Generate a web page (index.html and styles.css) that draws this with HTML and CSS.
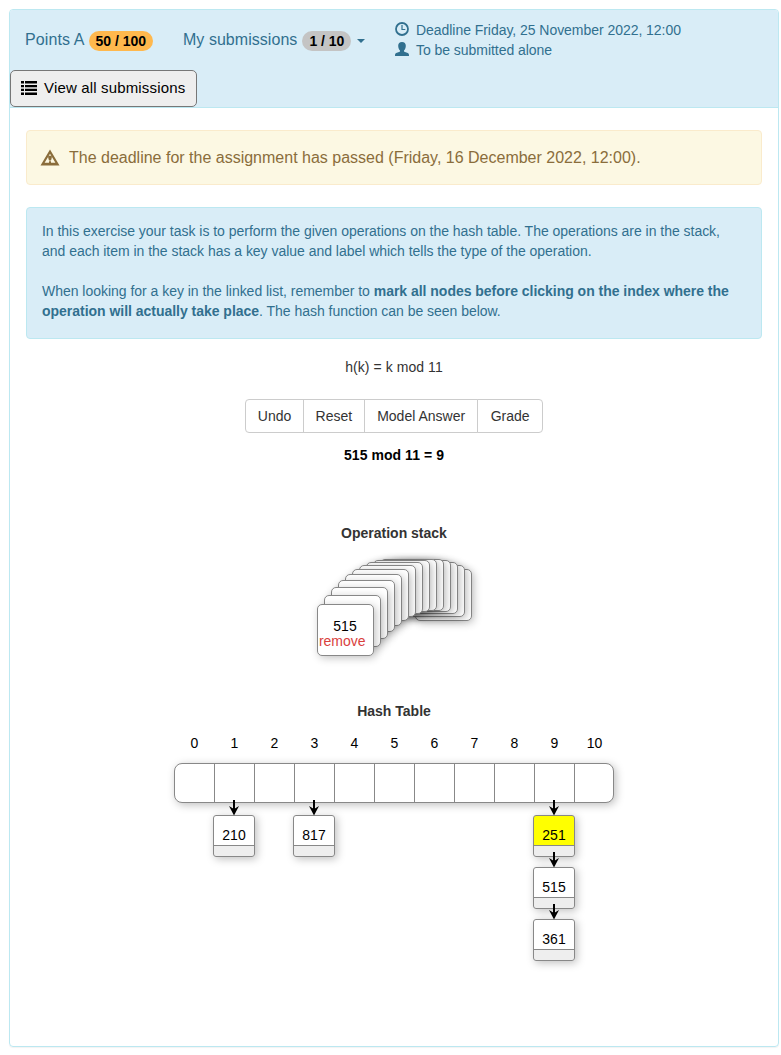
FILE: index.html
```html
<!DOCTYPE html>
<html lang="en">
<head>
<meta charset="utf-8">
<title>Hash table exercise</title>
<link rel="stylesheet" href="styles.css">
</head>
<body>
<main class="panel">
  <header class="panel-head">
    <div class="info-row">
      <div class="points">Points A<span class="badge badge-warning">50 / 100</span></div>
      <div class="submissions">My submissions<span class="badge">1 / 10</span><i class="caret"></i></div>
      <div class="details">
        <div class="detail"><svg class="icon" width="14" height="14" viewBox="0 0 14 14"><circle cx="7" cy="7" r="6" fill="none" stroke="currentColor" stroke-width="1.8"/><path d="M7 3v4.500h3.300" fill="none" stroke="currentColor" stroke-width="1.200"/></svg>Deadline Friday, 25 November 2022, 12:00</div>
        <div class="detail"><svg class="icon" width="14" height="14" viewBox="0 0 14 14"><path d="M7 0C4.500 0 3.200 1.400 3.200 3.700c0 2 .700 3.800 1.800 4.800v1C4.200 10.300 1 10.700.3 11.700 0 12.200 0 13 0 14h14c0-1 0-1.800-.3-2.300-.7-1-3.900-1.400-4.700-2.200v-1c1.100-1 1.800-2.800 1.800-4.800C10.800 1.400 9.500 0 7 0z" fill="currentColor"/></svg>To be submitted alone</div>
      </div>
    </div>
    <button class="view-all"><svg width="16" height="14" viewBox="0 0 16 14"><path d="M0 0h3v2.500H0zM4 0h12v2.500H4zM0 4h3v2.300H0zM4 4h12v2.300H4zM0 7.800h3v2.300H0zM4 7.800h12v2.300H4zM0 11.600h3V14H0zM4 11.600h12V14H4z"/></svg>View all submissions</button>
  </header>
  <div class="panel-body">
    <div class="alert alert-warning"><svg width="20" height="17" viewBox="0 0 20 17"><path fill-rule="evenodd" d="M10 .5L19.500 16.500H.5zM10 4.700L4.600 13.800h10.800z" fill="currentColor"/><path d="M8.200 6.800h3.600v2L11 11.500H9L8.200 8.800zM9 12.200h2V14H9z" fill="currentColor"/></svg>The deadline for the assignment has passed (Friday, 16 December 2022, 12:00).</div>
    <div class="alert alert-info">
      <p>In this exercise your task is to perform the given operations on the hash table. The operations are in the stack, and each item in the stack has a key value and label which tells the type of the operation.</p>
      <p>When looking for a key in the linked list, remember to <b>mark all nodes before clicking on the index where the operation will actually take place</b>. The hash function can be seen below.</p>
    </div>
    <p class="formula">h(k) = k mod 11</p>
    <div class="buttons"><button>Undo</button><button>Reset</button><button>Model Answer</button><button>Grade</button></div>
    <p class="result">515 mod 11 = 9</p>
    <h2 class="stack-title">Operation stack</h2>
    <div class="stack">
      <div class="card" style="left:98px;top:10px"></div>
      <div class="card" style="left:91px;top:6px"></div>
      <div class="card" style="left:84px;top:3px"></div>
      <div class="card" style="left:77px;top:1px"></div>
      <div class="card" style="left:70px;top:0px"></div>
      <div class="card" style="left:63px;top:0px"></div>
      <div class="card" style="left:56px;top:1px"></div>
      <div class="card" style="left:49px;top:3px"></div>
      <div class="card" style="left:42px;top:6px"></div>
      <div class="card" style="left:35px;top:10px"></div>
      <div class="card" style="left:28px;top:15px"></div>
      <div class="card" style="left:21px;top:21px"></div>
      <div class="card" style="left:14px;top:28px"></div>
      <div class="card" style="left:7px;top:36px"></div>
      <div class="card" style="left:0px;top:45px"><span class="key">515</span><span class="op">remove</span></div>
    </div>
    <h2 class="table-title">Hash Table</h2>
    <div class="indexes"><span>0</span><span>1</span><span>2</span><span>3</span><span>4</span><span>5</span><span>6</span><span>7</span><span>8</span><span>9</span><span>10</span></div>
    <div class="hash">
      <div class="cells"><i></i><i></i><i></i><i></i><i></i><i></i><i></i><i></i><i></i><i></i><i></i></div>
      <div class="node" style="left:39px;top:52px">210</div>
      <div class="node" style="left:119px;top:52px">817</div>
      <div class="node marked" style="left:359px;top:52px">251</div>
      <div class="node" style="left:359px;top:104px">515</div>
      <div class="node" style="left:359px;top:156px">361</div>
      <svg class="arrows" width="440" height="200" viewBox="0 0 440 200">
        <defs><g id="arrow"><path d="M0 0v11" stroke="#000" stroke-width="2"/><path d="M0 15.500L-5 6 0 9 5 6z"/></g></defs>
        <use href="#arrow" x="60" y="37"/><use href="#arrow" x="140" y="37"/><use href="#arrow" x="380" y="37"/><use href="#arrow" x="380" y="89"/><use href="#arrow" x="380" y="141"/>
      </svg>
    </div>
  </div>
</main>
</body>
</html>
```
FILE: styles.css
```css
* { box-sizing: border-box; }
body { margin: 0; padding: 9px 2px 8px 9px; background: #fff; color: #333; font: 14px/20px "Liberation Sans", Arial, sans-serif; }
p, h2 { margin: 0; }
button { font: inherit; }
svg { flex: none; }
.panel { height: 1038px; border: 1px solid #bce8f1; border-radius: 4px; box-shadow: 0 1px 1px rgba(0,0,0,.05); }
.panel-head { height: 98px; background: #d9edf7; border-bottom: 1px solid #bce8f1; border-radius: 3px 3px 0 0; color: #31708f; }
.info-row { display: flex; height: 60px; padding-left: 15px; font-size: 16px; white-space: nowrap; }
.points { display: flex; width: 158px; padding-top: 20px; letter-spacing: .1px; }
.submissions { display: flex; width: 212px; padding-top: 20px; letter-spacing: .04px; }
.badge { height: 20px; margin: 1px 0 0 5px; padding: 0 7px; border-radius: 10px; background: #c4c4c4; color: #000; font-size: 14px; font-weight: bold; line-height: 20px; letter-spacing: 0; }
.badge-warning { margin-left: 4px; background: #ffb84d; }
.caret { margin: 9px 0 0 6px; width: 8px; height: 4px; border: 4px solid transparent; border-top-color: currentColor; border-bottom: 0; }
.details { padding-top: 10px; font-size: 14px; letter-spacing: -.045px; }
.detail { display: flex; align-items: center; gap: 7px; }
.icon { margin-top: -2px; }
.view-all { display: flex; align-items: center; gap: 7px; height: 37px; width: 187px; padding: 0 10px 2px; border: 1px solid #777; border-radius: 5px; background: #eee; color: #000; font-size: 15px; letter-spacing: .16px; white-space: nowrap; }
.panel-body { padding: 22px 16px 0; }
.alert { border: 1px solid; border-radius: 4px; }
.alert-warning { display: flex; align-items: center; gap: 9px; height: 55px; padding-left: 13px; background: #fcf8e3; border-color: #faebcc; color: #8a6d3b; font-size: 16px; }
.alert-info { height: 132px; margin-top: 22px; padding: 13px 15px; background: #d9edf7; border-color: #bce8f1; color: #31708f; letter-spacing: -.024px; }
.alert-info p + p { margin-top: 20px; }
.formula { margin-top: 18px; text-align: center; letter-spacing: .06px; }
.buttons { display: flex; justify-content: center; margin-top: 22px; }
.buttons button { height: 34px; padding: 0 12px; border: 1px solid #ccc; background: #fff; color: #333; }
.buttons button + button { margin-left: -1px; }
.buttons button:first-child { border-radius: 4px 0 0 4px; }
.buttons button:nth-child(-n+2) { padding: 0 11.700px; }
.buttons button:nth-child(n+3) { padding: 0 12.300px; }
.buttons button:last-child { border-radius: 0 4px 4px 0; }
.result { margin-top: 12px; color: #000; font-weight: bold; text-align: center; letter-spacing: .05px; }
h2 { font-size: 14px; line-height: 20px; text-align: center; }
.stack-title { margin-top: 58px; }
.stack { position: relative; width: 155px; height: 97px; margin: 16px 0 0 291px; }
.card { position: absolute; width: 57px; height: 52px; padding: 14px 0 0 1px; border: 1px solid #888; border-radius: 5px; background: #fff; box-shadow: 2px 2px 8px rgba(0,0,0,.24); color: #000; line-height: 15px; }
.key, .op { display: block; }
.key { width: 52px; text-align: center; }
.op { color: #d9413d; letter-spacing: -.05px; }
.table-title { margin-top: 45px; }
.indexes { display: flex; margin: 12px 0 0 148.500px; color: #000; }
.indexes span { width: 40px; text-align: center; }
.hash { position: relative; width: 440px; height: 200px; margin: 10px 0 0 148px; }
.cells { display: flex; height: 40px; border: 1px solid #888; border-radius: 8px; background: #fff; box-shadow: 2px 2px 8px rgba(0,0,0,.25); }
.cells i { width: 40px; border-right: 1px solid #888; }
.cells i:last-child { flex: 1; border: 0; }
.node { position: absolute; width: 42px; height: 42px; padding-top: 9px; border: 1px solid #888; border-radius: 3px; background: linear-gradient(#fff 29px, #888 29px, #888 30px, #eee 30px); box-shadow: 2px 2px 8px rgba(0,0,0,.25); color: #000; text-align: center; }
.marked { background: linear-gradient(#ff0 29px, #888 29px, #888 30px, #eee 30px); }
.arrows { position: absolute; left: 0; top: 0; }
```
